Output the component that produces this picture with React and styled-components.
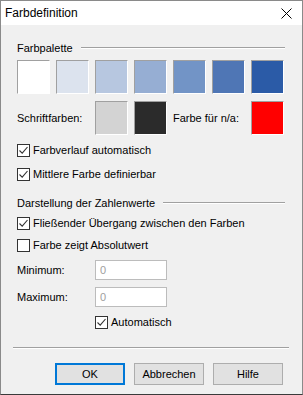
import React from 'react'
import styled, { createGlobalStyle } from 'styled-components'

const GlobalStyle = createGlobalStyle`
  html, body {
    margin: 0;
    padding: 0;
    background: #2c2c2c;
  }
  body {
    font-family: "Liberation Sans", Arial, sans-serif;
    font-size: 11px;
    color: #000;
  }
`

const Window = styled.div`
  width: 303px;
  height: 395px;
  box-sizing: border-box;
  border: 1px solid #8a8a8a;
  border-bottom-color: #3a3a3a;
  background: #f0f0f0;
  display: flex;
  flex-direction: column;
`

const TitleBar = styled.div`
  height: 24px;
  background: #ffffff;
  display: flex;
  align-items: center;
  justify-content: space-between;
  padding: 0 10px 0 4px;
  font-size: 12px;
`

const Body = styled.div`
  padding: 0 17px 0 16px;
  display: flex;
  flex-direction: column;
`

const GroupHeader = styled.div`
  display: flex;
  align-items: center;
  gap: 8px;
  height: 16px;
  margin-top: ${p => p.$top}px;
  &::after {
    content: "";
    flex: 1;
    height: 1px;
    background: #a0a0a0;
    border-bottom: 1px solid #ffffff;
  }
`

const SwatchGrid = styled.div`
  display: grid;
  grid-template-columns: repeat(7, 33px);
  column-gap: 6px;
  align-items: center;
  margin-top: ${p => p.$top}px;
`

const Swatch = styled.div`
  height: 34px;
  box-sizing: border-box;
  background: ${p => p.$color};
  border-top: 1px solid #a0a0a0;
  border-left: 1px solid #a0a0a0;
  border-right: 1px solid #ffffff;
  border-bottom: 1px solid #ffffff;
`

const GridLabel = styled.span`
  grid-column: span 2;
  white-space: nowrap;
`

const CheckRow = styled.label`
  display: flex;
  align-items: center;
  gap: 3px;
  height: 18px;
  margin-top: ${p => p.$top}px;
  margin-left: ${p => p.$indent || 0}px;
  white-space: nowrap;
`

const Box = styled.span`
  width: 13px;
  height: 13px;
  box-sizing: border-box;
  border: 1px solid #333333;
  background: #ffffff;
  display: flex;
  align-items: center;
  justify-content: center;
  flex-shrink: 0;
`

const FieldRow = styled.div`
  display: grid;
  grid-template-columns: 78px 72px;
  align-items: center;
  margin-top: ${p => p.$top}px;
`

const Input = styled.div`
  height: 20px;
  box-sizing: border-box;
  border: 1px solid #bcbcbc;
  background: #ffffff;
  color: #a0a0a0;
  padding-left: 4px;
  display: flex;
  align-items: center;
`

const Separator = styled.div`
  margin: 16px 13px 0 12px;
  height: 1px;
  background: #a0a0a0;
  border-bottom: 1px solid #ffffff;
`

const ButtonRow = styled.div`
  display: flex;
  justify-content: flex-end;
  gap: 9px;
  padding-right: 19px;
  margin-top: 14px;
`

const Button = styled.button`
  width: 70px;
  height: 22px;
  box-sizing: border-box;
  background: #e1e1e1;
  border: ${p => (p.$default ? '2px solid #0078d7' : '1px solid #adadad')};
  font-family: inherit;
  font-size: 11px;
  color: #000;
  padding: 0;
`

const Check = ({ checked }) => (
  <Box>
    {checked && (
      <svg width="11" height="11" viewBox="0 0 11 11">
        <path d="M1.5 5.5 L4.2 8.2 L9.5 2" fill="none" stroke="#333" strokeWidth="1.1" />
      </svg>
    )}
  </Box>
)

const palette = ['#ffffff', '#dce3ee', '#b7c7e0', '#96aed3', '#7294c6', '#4f76b5', '#2b5ba7']

export default function App() {
  return (
    <>
      <GlobalStyle />
      <Window>
        <TitleBar>
          <span>Farbdefinition</span>
          <svg width="11" height="11" viewBox="0 0 11 11">
            <path d="M0.5 0.5 L10.5 10.5 M10.5 0.5 L0.5 10.5" stroke="#000" strokeWidth="1" />
          </svg>
        </TitleBar>
        <Body>
          <GroupHeader $top={15}>Farbpalette</GroupHeader>
          <SwatchGrid $top={4}>
            {palette.map(c => (
              <Swatch key={c} $color={c} />
            ))}
          </SwatchGrid>
          <SwatchGrid $top={7}>
            <GridLabel>Schriftfarben:</GridLabel>
            <Swatch $color="#d3d3d3" />
            <Swatch $color="#2b2b2b" />
            <GridLabel>Farbe für n/a:</GridLabel>
            <Swatch $color="#ff0000" />
          </SwatchGrid>
          <CheckRow $top={6}><Check checked />Farbverlauf automatisch</CheckRow>
          <CheckRow $top={6}><Check checked />Mittlere Farbe definierbar</CheckRow>
          <GroupHeader $top={12}>Darstellung der Zahlenwerte</GroupHeader>
          <CheckRow $top={3}><Check checked />Fließender Übergang zwischen den Farben</CheckRow>
          <CheckRow $top={4}><Check />Farbe zeigt Absolutwert</CheckRow>
          <FieldRow $top={6}>
            <span>Minimum:</span>
            <Input>0</Input>
          </FieldRow>
          <FieldRow $top={7}>
            <span>Maximum:</span>
            <Input>0</Input>
          </FieldRow>
          <CheckRow $top={6} $indent={78}><Check checked />Automatisch</CheckRow>
        </Body>
        <Separator />
        <ButtonRow>
          <Button $default>OK</Button>
          <Button>Abbrechen</Button>
          <Button>Hilfe</Button>
        </ButtonRow>
      </Window>
    </>
  )
}
